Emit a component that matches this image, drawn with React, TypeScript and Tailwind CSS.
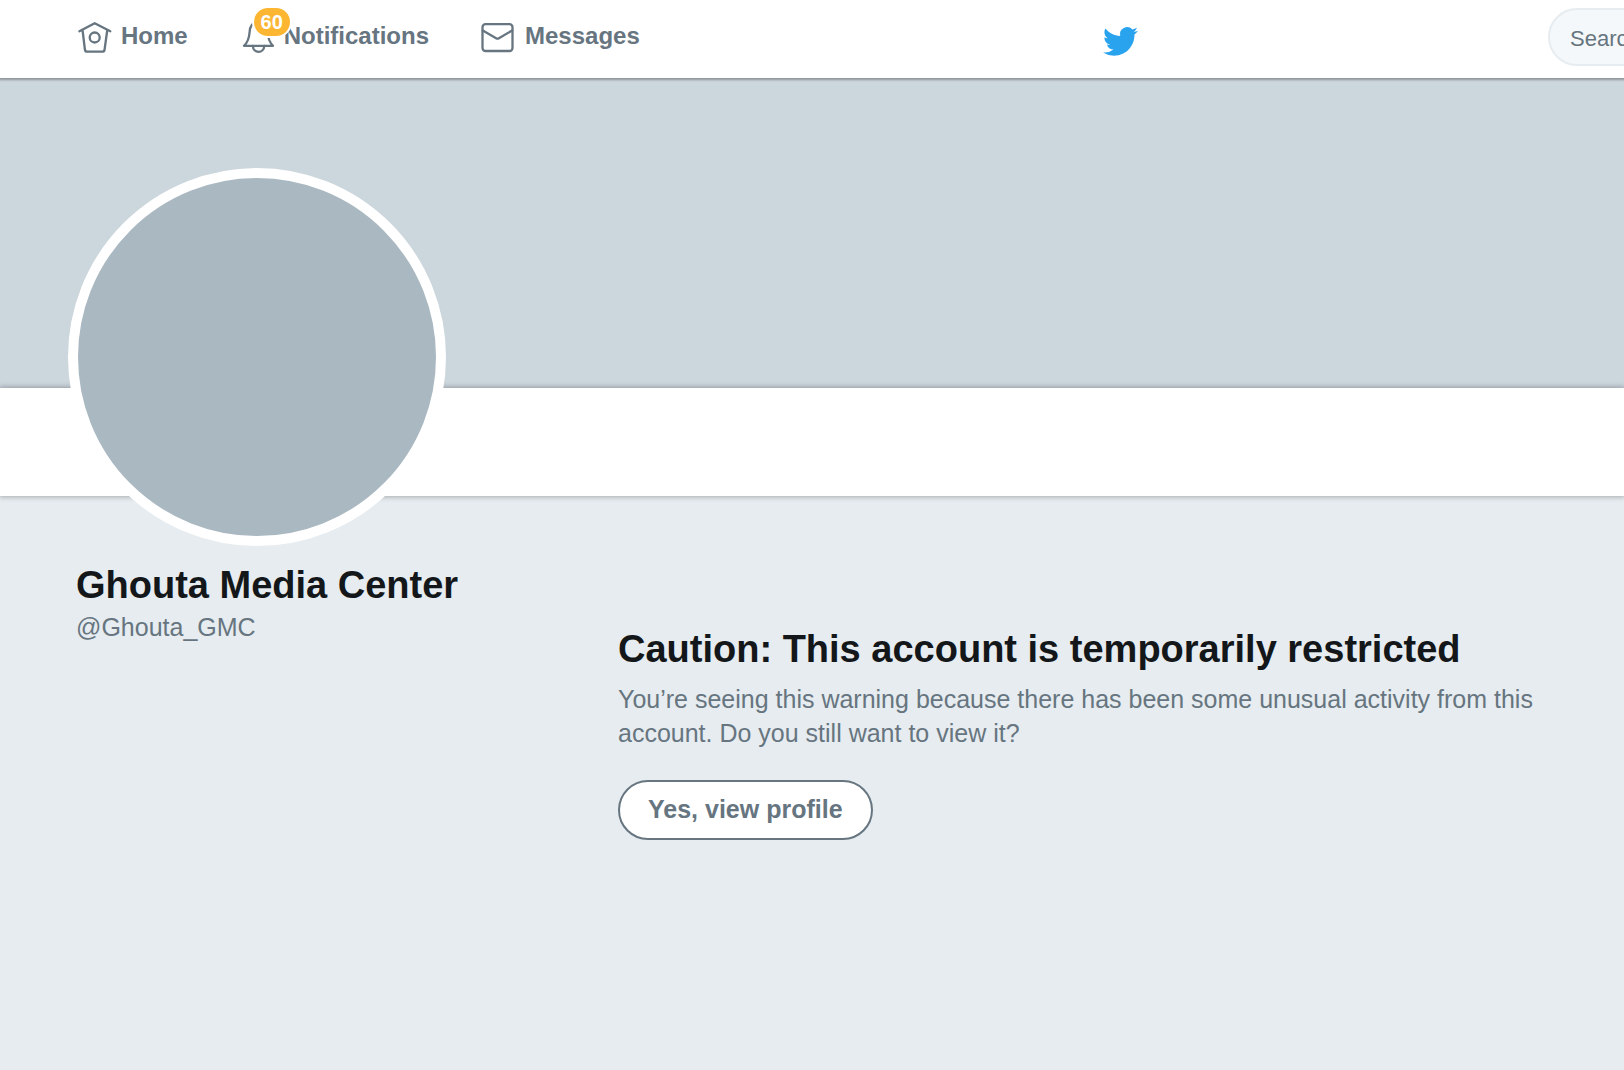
// src/App.tsx
import type { ReactNode } from 'react';

interface NavItemProps {
  label: string;
  badge?: number;
  children: ReactNode;
}

function HomeIcon() {
  return (
    <svg viewBox="0 0 36 36" className="size-9" fill="none" stroke="currentColor" strokeWidth="2.3" strokeLinecap="round" strokeLinejoin="round" aria-hidden="true">
      <path d="M2.400 13.300 17.700 5.200 33.300 13.300M5.600 12.500 7.900 31.500Q8.200 33.700 10.300 33.700H25.200Q27.300 33.700 27.600 31.500L30.200 12.500" />
      <circle cx="17.700" cy="19.500" r="5" />
    </svg>
  );
}

function BellIcon() {
  return (
    <svg viewBox="0 0 36 36" className="size-9" fill="none" stroke="currentColor" strokeWidth="2.3" strokeLinecap="round" strokeLinejoin="round" aria-hidden="true">
      <path d="M18.500 4C13 4 10 8 9.600 14 9.200 21 7.500 24.500 4 27.800H33C29.600 24.500 28 21 27.500 14 27.100 8 24 4 18.500 4Z" />
      <path d="M12.800 28C13 31.500 15.400 33.800 18.500 33.800S24.100 31.500 24.300 28" />
    </svg>
  );
}

function EnvelopeIcon() {
  return (
    <svg viewBox="0 0 36 36" className="size-9" fill="none" stroke="currentColor" strokeWidth="2.3" strokeLinecap="round" strokeLinejoin="round" aria-hidden="true">
      <rect x="1.500" y="6.200" width="30" height="26.800" rx="3" />
      <path d="M1.800 12.500 15.100 20.200Q16.500 21 17.900 20.200L31.200 12.500" />
    </svg>
  );
}

function BirdIcon() {
  return (
    <svg viewBox="0 0 24 24" className="size-[35px]" fill="currentColor" aria-hidden="true">
      <path d="M23.953 4.570a10 10 0 01-2.825.775 4.958 4.958 0 002.163-2.723c-.951.555-2.005.959-3.127 1.184a4.920 4.920 0 00-8.384 4.482C7.690 8.095 4.067 6.130 1.640 3.162a4.822 4.822 0 00-.666 2.475c0 1.710.870 3.213 2.188 4.096a4.904 4.904 0 01-2.228-.616v.060a4.923 4.923 0 003.946 4.827 4.996 4.996 0 01-2.212.085 4.936 4.936 0 004.604 3.417 9.867 9.867 0 01-6.102 2.105c-.390 0-.779-.023-1.170-.067a13.995 13.995 0 007.557 2.209c9.053 0 13.998-7.496 13.998-13.985 0-.210 0-.420-.015-.630A9.935 9.935 0 0024 4.590z" />
    </svg>
  );
}

function NavItem({ label, badge, children }: NavItemProps) {
  return (
    <a href="#" className="relative flex items-center gap-2">
      {children}
      <span className="text-2xl leading-9 font-bold">{label}</span>
      {badge !== undefined && (
        <span className="absolute -top-3 left-3 flex h-8 min-w-10 items-center justify-center rounded-full border-2 border-white bg-[#fcb632] text-xl font-bold text-white">
          {badge}
        </span>
      )}
    </a>
  );
}

function TopBar() {
  return (
    <header className="relative z-20 flex h-[78px] items-start overflow-x-clip bg-white shadow-[0_1px_2px_1px_rgba(0,0,0,0.3)]">
      <nav className="flex flex-1 gap-[52px] pt-[18px] pl-[77px]">
        <NavItem label="Home">
          <HomeIcon />
        </NavItem>
        <NavItem label="Notifications" badge={60}>
          <BellIcon />
        </NavItem>
        <NavItem label="Messages">
          <EnvelopeIcon />
        </NavItem>
      </nav>
      <a href="#" aria-label="Twitter" className="pt-6 text-[#2aa3ef]">
        <BirdIcon />
      </a>
      {/* the search field runs past the edge of narrow windows */}
      <form className="w-[486px] shrink-0 pt-2 pl-[410px]">
        <input
          type="search"
          aria-label="Search Twitter"
          placeholder="Search Twitter"
          className="h-[58px] w-[440px] rounded-full border-2 border-[#e6ecf0] bg-[#f5f8fa] px-5 pt-1 text-[22px] placeholder:text-[#66757f]"
        />
      </form>
    </header>
  );
}

export default function App() {
  return (
    <div className="min-h-screen overflow-x-clip bg-[#e6ecf0] font-['Liberation_Sans',Arial,sans-serif] text-[#66757f]">
      <TopBar />
      <div className="h-[310px] bg-[#ccd6dd]" />
      <div className="relative h-[108px] bg-white shadow-[0_0_5px_1px_rgba(0,0,0,0.28)]" />

      <main className="grid grid-cols-[542px_1fr] pl-[76px]">
        <aside className="relative -mt-[328px]">
          <div className="-ml-2 size-[378px] rounded-full border-10 border-white bg-[#aab8c2]" />
          <h1 className="mt-4 text-[38px] leading-[46px] font-bold text-[#14171a]">Ghouta Media Center</h1>
          <a href="#" className="block text-[25px] leading-[38px]">
            @Ghouta_GMC
          </a>
        </aside>

        <section className="pt-[130px] pr-[60px] pb-16">
          <h2 className="text-[38px] leading-[46px] font-bold text-[#14171a]">
            Caution: This account is temporarily restricted
          </h2>
          <p className="mt-2.5 text-[25px] leading-[34px]">
            You’re seeing this warning because there has been some unusual activity from this account. Do you still want to view it?
          </p>
          <button
            type="button"
            className="mt-[30px] h-[60px] rounded-full border-2 border-[#66757f] bg-white px-7 text-[25px] font-bold"
          >
            Yes, view profile
          </button>
        </section>
      </main>
    </div>
  );
}
